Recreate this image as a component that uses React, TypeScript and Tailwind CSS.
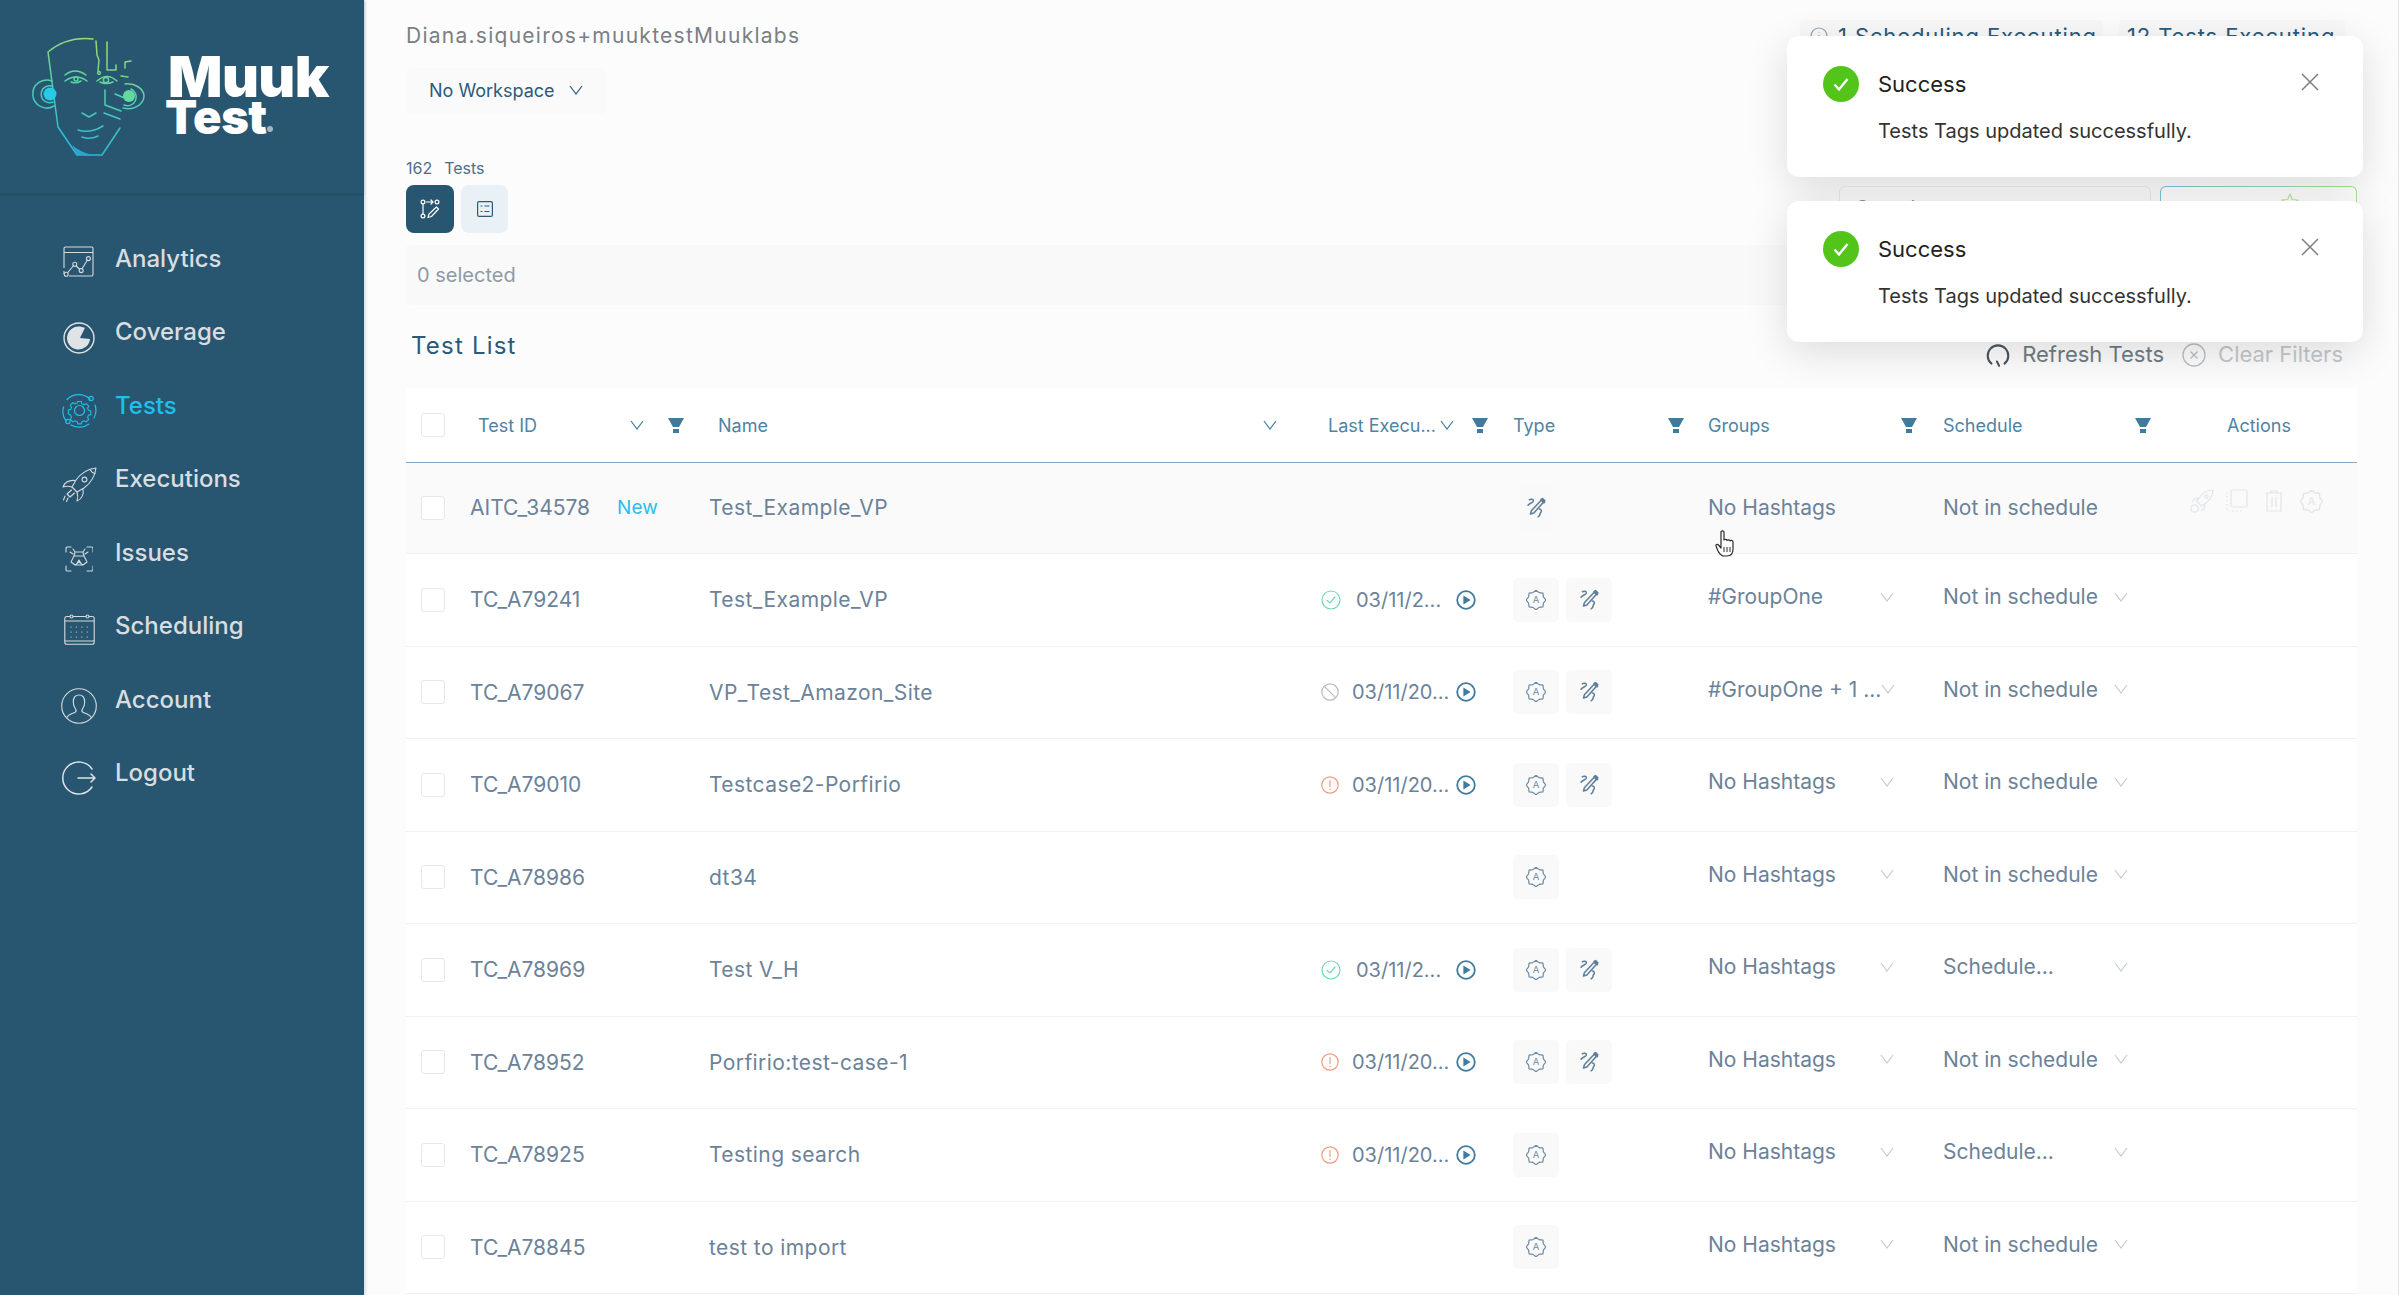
import type { ReactNode } from "react"

const badgePoints = Array.from({ length: 16 }, (_, i) => {
  const a = (i / 16) * Math.PI * 2
  const r = i % 2 === 0 ? 9.8 : 8
  return `${(10 + r * Math.sin(a)).toFixed(2)},${(10 - r * Math.cos(a)).toFixed(2)}`
}).join(" ")

function FaceLogo() {
  return (
    <svg viewBox="30 35 120 130" className="h-[130px] w-[120px] shrink-0" fill="none" strokeLinecap="round" strokeLinejoin="round">
      <defs>
        <linearGradient id="faceLine" gradientUnits="userSpaceOnUse" x1="100" y1="38" x2="70" y2="156">
          <stop offset="0" stopColor="#a6d96a" />
          <stop offset="0.45" stopColor="#4fd0b0" />
          <stop offset="1" stopColor="#29b5e2" />
        </linearGradient>
      </defs>
      <g stroke="url(#faceLine)" strokeWidth="1.5">
        <path d="M93 39C75 37 60 42 48 52L58 127L77 155L102 155L120 128" />
        <path d="M52 81A14 14 0 1 0 54 106" />
        <path d="M52 86A8.5 8.5 0 1 0 53 102" />
        <path d="M65 75Q75 67 86 75" />
        <path d="M65 81Q76 73 87 81M71 82Q76 84 81 81" />
        <path d="M97 81Q107 72 117 81M100 82Q106 85 113 82" />
        <circle cx="76" cy="79" r="2" />
        <circle cx="106" cy="80" r="2.6" />
        <path d="M82 113L89 117L96 113" />
        <path d="M78 130Q90 134 103 126M82 137Q90 140 98 136" />
        <path d="M96 41L97 55L99 60L98 71M107 42L107 70L116 70L116 65M125 68L125 62L131 61M121 76L128 77" />
        <circle cx="99" cy="73" r="1.4" />
        <path d="M105 90L105 105L121 111M115 94L127 99M104 113L120 119" />
        <path d="M125 84A16.5 12.5 0 0 1 144 96A16 13 0 0 1 123 108" />
        <path d="M131 89A8 8 0 0 1 124 105" />
      </g>
      <circle cx="50" cy="94" r="6.5" fill="#2bc7e6" />
      <circle cx="129" cy="96" r="6" fill="#63d9a0" />
      <path d="M72 145Q80 152 92 155L77 155Z" fill="#2aa6d0" />
    </svg>
  )
}

function NavAnalytics() {
  return (
    <svg viewBox="0 0 32 32" className="h-[32px] w-[32px]" fill="none" stroke="#d5dadd" strokeWidth="1.1" strokeLinejoin="round">
      <path d="M1 22V2.5A1.5 1.5 0 0 1 2.5 1h26A1.5 1.5 0 0 1 30 2.5v26a1.5 1.5 0 0 1-1.5 1.5H6" />
      <path d="M1 6.5h29M1 25v3" />
      <path d="M3.5 28L11.5 18.5L18 24.5L25 13" />
      <circle cx="3.2" cy="28.3" r="2" fill="#285670" />
      <circle cx="11.8" cy="18.2" r="2" fill="#285670" />
      <circle cx="18.2" cy="24.6" r="2" fill="#285670" />
      <circle cx="25.4" cy="12.6" r="2" fill="#285670" />
    </svg>
  )
}

function NavCoverage() {
  return (
    <svg viewBox="0 0 32 32" className="h-[32px] w-[32px]" fill="none">
      <circle cx="16" cy="16" r="15" stroke="#e0e3e5" strokeWidth="1.4" />
      <path d="M17 16L27 17A11.5 11.5 0 1 1 17 4.6L22 5.8Z" fill="#e0e3e5" />
      <path d="M18 15.5L23.5 7L27.5 15Z" fill="#285670" />
    </svg>
  )
}

function NavTests() {
  return (
    <svg viewBox="0 0 35 35" className="h-[35px] w-[35px]" fill="none" stroke="#1fc0ea" strokeWidth="1.2" strokeLinecap="round">
      <circle cx="17.5" cy="17.5" r="5" />
      <path d="M15.5 7.5h4l.7 2.6 2.5 1 2.3-1.3 2.8 2.8-1.3 2.3 1 2.5 2.5.6v4l-2.5.7-1 2.4 1.3 2.3-2.8 2.8-2.3-1.3-2.5 1-.7 2.5h-4l-.6-2.5-2.5-1-2.3 1.3-2.8-2.8 1.3-2.3-1-2.4L5.1 21v-4l2.5-.6 1-2.5-1.3-2.3 2.8-2.8 2.3 1.3 2.5-1z" transform="translate(1.75 1.75) scale(0.9)" />
      <path d="M28 6A16.5 16.5 0 0 0 5 6.5M1.5 14A16.5 16.5 0 0 0 4 28M9 32A16.5 16.5 0 0 0 27 31M32 25A16.5 16.5 0 0 0 33 12" />
      <circle cx="29" cy="5.5" r="2.2" />
      <circle cx="6" cy="28.5" r="2.2" />
    </svg>
  )
}

function NavExecutions() {
  return (
    <svg viewBox="0 0 35 35" className="h-[35px] w-[35px]" fill="none" stroke="#d5dadd" strokeWidth="1.1" strokeLinejoin="round" strokeLinecap="round">
      <path d="M34 1C26 2 19 6 14 13L10 20L15 25L22 21C29 16 33 9 34 1Z" />
      <path d="M28 2.5C29 4.5 31 6 33 6.5" />
      <circle cx="22.5" cy="12.5" r="2.4" />
      <path d="M13 13.5C8 13 3 15 1 20C4 19 7 19 10 20" />
      <path d="M21 22C22 27 20 32 15 34C16 31 16 28 15 25" />
      <path d="M9.5 23L5 27L8 30L12.5 26M3 29L1.5 33M6 31L4.5 34.5" />
    </svg>
  )
}

function NavIssues() {
  return (
    <svg viewBox="0 0 28 26" className="h-[26px] w-[28px]" fill="none" stroke="#d5dadd" strokeWidth="1.1" strokeLinecap="round" strokeLinejoin="round">
      <path d="M1 6V2A1.5 1.5 0 0 1 2.5 1H6M22 1h4.5A1.5 1.5 0 0 1 28 2.5V6M1 20v4.5A1.5 1.5 0 0 0 2.5 25H6M22 25h4.5a1.5 1.5 0 0 0 1.5-1.5V20" />
      <path d="M10 6L8 3M18 6l2-3M10 6h8l1 4H9zM9 10l-3 6 4 3 4-3 4 3 4-3-3-6M14 14l-3 5h6z" />
      <path d="M8 8L5 6M20 8l3-2" />
    </svg>
  )
}

function NavScheduling() {
  return (
    <svg viewBox="0 0 31 32" className="h-[32px] w-[31px]" fill="none" stroke="#d5dadd" strokeWidth="1.1" strokeLinecap="round">
      <rect x="0.8" y="3.5" width="29.4" height="27.7" rx="2" />
      <path d="M1 8h29M1 28h29" />
      <circle cx="7.5" cy="3.5" r="1.5" fill="#285670" />
      <circle cx="23.5" cy="3.5" r="1.5" fill="#285670" />
      <g strokeWidth="1.2" strokeDasharray="0.1 5.3">
        <path d="M7 14h18M7 19h18M7 24h18" />
      </g>
    </svg>
  )
}

function NavAccount() {
  return (
    <svg viewBox="0 0 36 36" className="h-[36px] w-[36px]" fill="none" stroke="#d5dadd" strokeWidth="1.1" strokeLinejoin="round">
      <circle cx="18" cy="18" r="17.3" />
      <path d="M5.5 30C7 26 12 25.5 14.5 24C15.5 23.2 15 21.5 14 20C12 17.5 11.5 11 14 8.5C16 6.5 20 6.5 22 8.5C24.5 11 24 17.5 22 20C21 21.5 20.5 23.2 21.5 24C24 25.5 29 26 30.5 30" />
    </svg>
  )
}

function NavLogout() {
  return (
    <svg viewBox="0 0 34 34" className="h-[34px] w-[34px]" fill="none" stroke="#e0e3e5" strokeWidth="1.5" strokeLinecap="round" strokeLinejoin="round">
      <path d="M30 8A16 16 0 1 0 30 26" />
      <path d="M16 17h17M29 13l4 4-4 4" />
    </svg>
  )
}

const navItems: { label: string; icon: ReactNode; shift: string; active?: boolean }[] = [
  { label: "Analytics", icon: <NavAnalytics />, shift: "mt-[6px]" },
  { label: "Coverage", icon: <NavCoverage />, shift: "mt-[12px]" },
  { label: "Tests", icon: <NavTests />, shift: "mt-[10px]", active: true },
  { label: "Executions", icon: <NavExecutions />, shift: "mt-[10px]" },
  { label: "Issues", icon: <NavIssues />, shift: "mt-[12px]" },
  { label: "Scheduling", icon: <NavScheduling />, shift: "mt-[6px]" },
  { label: "Account", icon: <NavAccount />, shift: "mt-[12px]" },
  { label: "Logout", icon: <NavLogout />, shift: "mt-[10px]" },
]

function Sidebar() {
  return (
    <aside className="flex h-full w-[364px] shrink-0 flex-col bg-[#285670] shadow-[2px_0_2px_#dde1e5]">
      <div className="flex h-[194px] items-start gap-[18px] border-b border-[#245068] pl-[30px] pt-[35px] shadow-[0_1px_2px_rgba(20,50,70,0.25)]">
        <FaceLogo />
        <div className="relative pt-[20px] font-['Inter',sans-serif] font-black text-white">
          <div className="text-[57px] leading-[44px] tracking-[-0.01em]">Muuk</div>
          <div className="-ml-[3px] text-[47px] leading-[35px] tracking-[-0.01em]">Test</div>
          <span className="absolute left-[99px] top-[91px] h-[6px] w-[6px] rounded-full bg-[#a3b6c3]" />
        </div>
      </div>
      <nav className="flex flex-col pt-[28px]">
        {navItems.map((item) => (
          <div key={item.label} className="flex h-[73.5px] items-center">
            <div className={`flex w-[115px] shrink-0 justify-center pl-[47px] pr-[4px] ${item.shift}`}>{item.icon}</div>
            <span className={`text-[24px] font-medium ${item.active ? "text-[#1cc0ea]" : "text-[#d8dde0]"}`}>
              {item.label}
            </span>
          </div>
        ))}
      </nav>
    </aside>
  )
}

function Chevron({ className = "text-[#3f7b9e]" }: { className?: string }) {
  return (
    <svg viewBox="0 0 14 10" className={`h-[10px] w-[14px] shrink-0 ${className}`} fill="none" stroke="currentColor" strokeWidth="1.2">
      <path d="M1 1L7 9L13 1" />
    </svg>
  )
}

function Funnel() {
  return (
    <svg viewBox="0 0 16 15" className="h-[15px] w-[16px] shrink-0" fill="#3f7b9e">
      <path d="M0 0H16L11 9H5Z" />
      <rect x="5" y="11" width="6" height="4" />
    </svg>
  )
}

function Checkbox() {
  return <div className="h-[24px] w-[24px] shrink-0 rounded-[3px] border border-[#e8e8e8] bg-white" />
}

function BadgeIcon({ color = "#6f8ba3", size = 20 }: { color?: string; size?: number }) {
  return (
    <svg viewBox="0 0 20 20" width={size} height={size} fill="none">
      <polygon points={badgePoints} stroke={color} strokeWidth="1.2" strokeLinejoin="round" />
      <text x="10" y="13.4" textAnchor="middle" fontSize="9.5" fontFamily="Inter, sans-serif" fill={color}>
        A
      </text>
    </svg>
  )
}

function PenIcon() {
  return (
    <svg viewBox="0 0 20 20" className="h-[22px] w-[22px]" fill="none" stroke="#5f7f99" strokeWidth="1.4" strokeLinecap="round" strokeLinejoin="round">
      <path d="M4 2.5C5.5 1.5 8 2 7.5 3.8C7 5.3 4 5.5 2.8 7.5" />
      <path d="M16 1.5L18 3.5L8 14.5L5 15.5L5.8 12.5Z" />
      <path d="M15.2 2.5L17.2 4.5" strokeWidth="2.6" />
      <path d="M13 11C15 11 15.5 13 14 14.5C13.5 15.5 14 17 12 18" />
    </svg>
  )
}

function TypeButton({ children }: { children: ReactNode }) {
  return <div className="flex h-[44px] w-[46px] items-center justify-center rounded-[5px] bg-[#f9f9f9]">{children}</div>
}

function PlayIcon() {
  return (
    <svg viewBox="0 0 20 20" className="h-[20px] w-[20px] shrink-0" fill="none">
      <circle cx="10" cy="10" r="8.8" stroke="#3f7b9e" strokeWidth="1.8" />
      <path d="M7.4 5.6L14.6 10L7.4 14.4Z" fill="#3f7b9e" />
    </svg>
  )
}

type Status = "ok" | "blocked" | "fail"

function StatusIcon({ status }: { status: Status }) {
  if (status === "ok") {
    return (
      <svg viewBox="0 0 20 20" className="h-[20px] w-[20px] shrink-0" fill="none" stroke="#6fd8b2" strokeWidth="1.2" strokeLinecap="round">
        <circle cx="10" cy="10" r="9" />
        <path d="M6 10.5L9 13L14 7" />
      </svg>
    )
  }
  if (status === "blocked") {
    return (
      <svg viewBox="0 0 18 18" className="h-[18px] w-[18px] shrink-0" fill="none" stroke="#b9bcbf" strokeWidth="1.2">
        <circle cx="9" cy="9" r="8.2" />
        <path d="M3.4 3.4L14.6 14.6" />
      </svg>
    )
  }
  return (
    <svg viewBox="0 0 18 18" className="h-[18px] w-[18px] shrink-0" fill="none" stroke="#f59a7e" strokeWidth="1.2" strokeLinecap="round">
      <circle cx="9" cy="9" r="8.2" />
      <path d="M9 4.5V10.5M9 13V13.4" />
    </svg>
  )
}

type Row = {
  id: string
  name: string
  status?: Status
  date?: string
  pen?: boolean
  group: string
  schedule: string
}

const rows: Row[] = [
  { id: "TC_A79241", name: "Test_Example_VP", status: "ok", date: "03/11/2...", pen: true, group: "#GroupOne", schedule: "Not in schedule" },
  { id: "TC_A79067", name: "VP_Test_Amazon_Site", status: "blocked", date: "03/11/20...", pen: true, group: "#GroupOne + 1 ...", schedule: "Not in schedule" },
  { id: "TC_A79010", name: "Testcase2-Porfirio", status: "fail", date: "03/11/20...", pen: true, group: "No Hashtags", schedule: "Not in schedule" },
  { id: "TC_A78986", name: "dt34", group: "No Hashtags", schedule: "Not in schedule" },
  { id: "TC_A78969", name: "Test V_H", status: "ok", date: "03/11/2...", pen: true, group: "No Hashtags", schedule: "Schedule..." },
  { id: "TC_A78952", name: "Porfirio:test-case-1", status: "fail", date: "03/11/20...", pen: true, group: "No Hashtags", schedule: "Not in schedule" },
  { id: "TC_A78925", name: "Testing search", status: "fail", date: "03/11/20...", group: "No Hashtags", schedule: "Schedule..." },
  { id: "TC_A78845", name: "test to import", group: "No Hashtags", schedule: "Not in schedule" },
]

const rowGrid = "grid grid-cols-[64px_239px_611px_193px_195px_235px_247px_167px] items-center text-[21px] text-[#6b8299]"

function TableHeader() {
  return (
    <div className="grid h-[75px] grid-cols-[72px_240px_610px_185px_195px_235px_284px_130px] items-center border-b-[1.5px] border-[#84a8c2] text-[18px] text-[#4d84a5]">
      <div className="pl-[15px]">
        <Checkbox />
      </div>
      <div className="flex items-center pr-[34px]">
        <span>Test ID</span>
        <span className="ml-auto mr-[24px]">
          <Chevron />
        </span>
        <Funnel />
      </div>
      <div className="flex items-center justify-between pr-[51px]">
        <span>Name</span>
        <Chevron />
      </div>
      <div className="flex items-center pr-[25px]">
        <span>Last Execu...</span>
        <span className="ml-[4px]">
          <Chevron />
        </span>
        <span className="ml-auto">
          <Funnel />
        </span>
      </div>
      <div className="flex items-center justify-between pr-[24px]">
        <span>Type</span>
        <Funnel />
      </div>
      <div className="flex items-center justify-between pr-[26px]">
        <span>Groups</span>
        <Funnel />
      </div>
      <div className="flex items-center justify-between pr-[76px]">
        <span>Schedule</span>
        <Funnel />
      </div>
      <div>Actions</div>
    </div>
  )
}

function HoverRow() {
  return (
    <div className={`${rowGrid} h-[91px] border-b border-[#f1f1f1] bg-[#fafafa]`}>
      <div className="pl-[15px]">
        <Checkbox />
      </div>
      <div className="flex items-center">
        <span>AITC_34578</span>
        <span className="ml-[27px] text-[19px] text-[#2cbde8]">New</span>
      </div>
      <div className="tracking-[0.02em]">Test_Example_VP</div>
      <div />
      <div>
        <TypeButton>
          <PenIcon />
        </TypeButton>
      </div>
      <div>No Hashtags</div>
      <div>Not in schedule</div>
      <div className="-mt-[14px] flex items-center gap-[12px]">
        <svg viewBox="0 0 24 24" className="h-[24px] w-[24px]" fill="none" stroke="#e2e5e7" strokeWidth="1.2" strokeLinejoin="round">
          <path d="M23 1C17 1.5 12 4 9 9L6.5 12L11.5 17L15 14.5C20 11.5 22.5 7 23 1Z" />
          <circle cx="16.5" cy="7.5" r="1.6" />
          <circle cx="4.5" cy="19.5" r="3.7" />
          <path d="M9 9L4 10L2 13M15 14.5L14 20L11 22" />
        </svg>
        <svg viewBox="0 0 22 24" className="h-[24px] w-[22px]" fill="none" stroke="#e2e5e7" strokeWidth="1.2">
          <rect x="5" y="1" width="16" height="17" rx="1.5" />
          <path d="M1 3V22H18" strokeDasharray="1.5 2.5" />
        </svg>
        <svg viewBox="0 0 18 22" className="ml-[5px] h-[22px] w-[18px]" fill="none" stroke="#e2e5e7" strokeWidth="1.2">
          <path d="M2 3H16V21H2ZM0.5 3H17.5M6 3V1H12V3M7 7V17M11 7V17" />
        </svg>
        <span className="ml-[5px]">
          <BadgeIcon color="#e2e5e7" size={23} />
        </span>
      </div>
    </div>
  )
}

function TestRow({ row }: { row: Row }) {
  const isLong = row.date?.includes("20...")
  return (
    <div className={`${rowGrid} h-[92.5px] border-b border-[#f1f1f1]`}>
      <div className="pl-[15px]">
        <Checkbox />
      </div>
      <div>{row.id}</div>
      <div className="tracking-[0.02em]">{row.name}</div>
      <div className="flex items-center pl-[1px]">
        {row.status && <StatusIcon status={row.status} />}
        {row.date && <span className={isLong ? "ml-[13px] text-[20px]" : "ml-[15px] text-[20px]"}>{row.date}</span>}
        {row.date && (
          <span className="ml-auto mr-[37px]">
            <PlayIcon />
          </span>
        )}
      </div>
      <div className="flex gap-[7px]">
        <TypeButton>
          <BadgeIcon />
        </TypeButton>
        {row.pen && (
          <TypeButton>
            <PenIcon />
          </TypeButton>
        )}
      </div>
      <div className="-mt-[6px] flex items-center pr-[49px]">
        <span className="whitespace-nowrap">{row.group}</span>
        <span className="ml-auto">
          <Chevron className="text-[#c4ccd2]" />
        </span>
      </div>
      <div className="-mt-[6px] flex items-center pr-[62px]">
        <span className="whitespace-nowrap">{row.schedule}</span>
        <span className="ml-auto">
          <Chevron className="text-[#c4ccd2]" />
        </span>
      </div>
      <div />
    </div>
  )
}

function Toast() {
  return (
    <div className="h-[141px] w-[576px] rounded-[12px] bg-white px-[36px] pt-[30px] shadow-[0_10px_40px_rgba(0,0,0,0.13)]">
      <div className="flex h-[36px] items-center">
        <svg viewBox="0 0 36 36" className="h-[36px] w-[36px] shrink-0" fill="none">
          <circle cx="18" cy="18" r="18" fill="#52c41a" />
          <path d="M11.5 18.5L16 23.5L24.5 13" stroke="#fff" strokeWidth="2.4" />
        </svg>
        <span className="ml-[19px] text-[22px] text-[#222]">Success</span>
        <svg viewBox="0 0 18 18" className="ml-auto mr-[8px] -mt-[4px] h-[18px] w-[18px]" fill="none" stroke="#7d7d7d" strokeWidth="1.5">
          <path d="M1 1L17 17M17 1L1 17" />
        </svg>
      </div>
      <div className="mt-[16px] pl-[55px] text-[20px] leading-[26px] text-[#333]">Tests Tags updated successfully.</div>
    </div>
  )
}

export default function App() {
  return (
    <div className="relative flex h-[1295px] w-full overflow-hidden bg-[#fcfcfc] font-['Inter',sans-serif]">
      <Sidebar />
      <main className="min-w-0 flex-1 border-r border-[#e3e3e3] pl-[42px] pr-[41px]">
        <div className="mt-[22px] flex h-[28px] items-center justify-between">
          <span className="text-[21px] tracking-[0.06em] text-[#7a7f84]">Diana.siqueiros+muuktestMuuklabs</span>
          <div className="flex gap-[16px] pr-[12px] text-[22px] tracking-[0.04em] text-[#2b5a78]">
            <span className="flex h-[32px] w-[303px] items-center gap-[10px] whitespace-nowrap rounded-[4px] bg-[#f8f8f8] pl-[10px]">
              <svg viewBox="0 0 18 18" className="h-[18px] w-[18px]" fill="none" stroke="#8fa3b3" strokeWidth="1.2">
                <circle cx="9" cy="9" r="8" />
                <path d="M9 8V13M9 5V5.5" />
              </svg>
              1 Scheduling Executing
            </span>
            <span className="flex h-[32px] w-[226px] items-center whitespace-nowrap rounded-[4px] bg-[#f8f8f8] pl-[8px]">12 Tests Executing</span>
          </div>
        </div>

        <button className="mt-[18px] flex h-[46px] w-[201px] items-center gap-[14px] rounded-[6px] bg-[#fafafa] pb-[2px] pl-[23px] text-[18px] text-[#2b5a7a]">
          No Workspace
          <Chevron className="text-[#2b5a7a]" />
        </button>

        <div className="flex items-start justify-between">
          <div>
            <div className="mt-[44px] flex h-[20px] items-center gap-[12px] text-[16px] text-[#4a6f88]">
              <span>162</span>
              <span>Tests</span>
            </div>
            <div className="mt-[7px] flex gap-[7px]">
              <div className="flex h-[48px] w-[48px] items-center justify-center rounded-[8px] bg-[#285670]">
                <svg viewBox="0 0 20 20" className="h-[20px] w-[20px]" fill="none" stroke="#fff" strokeWidth="1.2" strokeLinecap="round" strokeLinejoin="round">
                  <circle cx="3" cy="3" r="1.9" />
                  <circle cx="3" cy="17" r="1.9" />
                  <circle cx="17" cy="3" r="1.9" />
                  <path d="M3 5V15M6.5 3H13M11 1L13 3L11 5" />
                  <path d="M16.5 8L18.5 10L11.5 17.5L8 18.5L9 15Z" />
                </svg>
              </div>
              <div className="flex h-[48px] w-[47px] items-center justify-center rounded-[8px] bg-[#e9f0f6]">
                <svg viewBox="0 0 16 16" className="h-[16px] w-[16px]" fill="none" stroke="#2b5a78" strokeWidth="1.2" strokeLinecap="round">
                  <rect x="0.6" y="0.6" width="14.8" height="14.8" rx="1.5" />
                  <path d="M4 5H5M8 5H12M4 10.5H5M8 10.5H12" />
                </svg>
              </div>
            </div>
          </div>
          <div className="mt-[72px] flex gap-[9px]">
            <div className="h-[46px] w-[312px] rounded-[6px] border border-[#ececec] pl-[16px] pt-[6px] text-[20px] text-[#8a97a1]">Search</div>
            <div className="h-[46px] w-[197px] rounded-[6px] bg-linear-to-r from-[#79c5d8] to-[#aee28c] p-[1px]">
              <div className="flex h-full w-full justify-end rounded-[5px] bg-white pr-[57px] pt-[6px]">
                <svg viewBox="0 0 18 18" className="h-[18px] w-[18px]" fill="none" stroke="#bfe6a8" strokeWidth="1.2" strokeLinejoin="round">
                  <path d="M9 1L11.3 6.5L17 7L12.6 10.7L14 16.5L9 13.4L4 16.5L5.4 10.7L1 7L6.7 6.5Z" />
                </svg>
              </div>
            </div>
          </div>
        </div>

        <div className="mt-[12px] flex h-[60px] items-center rounded-[4px] bg-[#f9f9f9] pl-[11px] text-[20px] text-[#8e9aa5]">0 selected</div>

        <div className="mt-[26px] flex h-[30px] items-start justify-between">
          <span className="pl-[5px] text-[24px] leading-[30px] tracking-[0.05em] text-[#2b5a78]">Test List</span>
          <div className="mt-[7px] flex items-center pr-[14px] text-[22px]">
            <svg viewBox="0 0 22 24" className="h-[26px] w-[24px]" fill="none" stroke="#4a5560" strokeWidth="1.9" strokeLinecap="round">
              <path d="M5 20A9.5 9.5 0 1 1 17 20" />
              <path d="M10 18L12 22" />
            </svg>
            <span className="ml-[12px] text-[#6f7c85]">Refresh Tests</span>
            <svg viewBox="0 0 24 24" className="ml-[18px] h-[24px] w-[24px]" fill="none" stroke="#b9bec2" strokeWidth="1.3">
              <circle cx="12" cy="12" r="11" />
              <path d="M8.5 8.5L15.5 15.5M15.5 8.5L8.5 15.5" />
            </svg>
            <span className="ml-[12px] text-[#c3c8cc]">Clear Filters</span>
          </div>
        </div>

        <div className="mt-[27px] bg-white">
          <TableHeader />
          <HoverRow />
          {rows.map((row) => (
            <TestRow key={row.id} row={row} />
          ))}
        </div>
      </main>

      <div className="absolute left-[1787px] top-[36px] flex flex-col gap-[24px]">
        <Toast />
        <Toast />
      </div>

      <svg viewBox="0 0 24 27" className="absolute left-[1715px] top-[530px] h-[27px] w-[24px]" fill="#fff" stroke="#2a2a2a" strokeWidth="1.2" strokeLinejoin="round">
        <path d="M6 2C6 0.5 9 0.5 9 2V10C9 9 12 9 12 10.5C12 9.5 15 9.5 15 11C15 10 18 10 18 12V19C18 23 16 26 12 26H9C6 26 5 24 3 21L1 16C0.5 14.5 2.5 14 3.5 15L6 18Z" />
        <path d="M9 17V22M12 17V22M15 17V22" strokeWidth="1" />
      </svg>
    </div>
  )
}
